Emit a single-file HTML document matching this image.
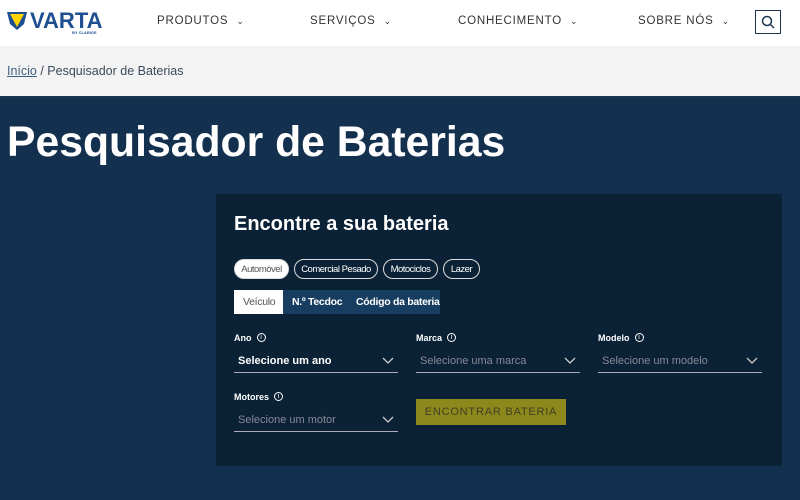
<!DOCTYPE html>
<html><head><meta charset="utf-8"><style>
*{margin:0;padding:0;box-sizing:border-box}
body{width:800px;height:500px;overflow:hidden;font-family:"Liberation Sans",Arial,sans-serif;background:#13314f}
.hdr{height:46px;background:#fff;position:relative}
.nav{position:absolute;top:15px;font-size:11.5px;letter-spacing:.8px;color:#333}
.nav span{font-size:9px;margin-left:8px}
.crumb{height:52px;background:#f3f3f3;font-size:12.5px;color:#3a4a5a;padding:18px 0 0 7px;border-bottom:2px solid #1d3550}
.crumb u{color:#3f5f7f}
h1{position:absolute;top:118px;left:7px;color:#fff;font-size:42.7px;font-weight:bold}
.panel{position:absolute;left:216px;top:194px;width:566px;height:272px;background:#0b2135}
.panel h2{position:absolute;left:18px;top:19px;color:#fff;font-size:20px}
.pill{position:absolute;z-index:5;top:259px;height:20px;border:1.5px solid #ddd;border-radius:11px;color:#fff;font-size:9.5px;letter-spacing:-.5px;white-space:nowrap;text-align:center;padding-top:3.5px}
.tabs{position:absolute;left:18px;top:96px;height:24px;background:#173d60;width:206px}
.tab{position:absolute;top:0;height:24px;font-size:10.5px;color:#fff;font-weight:bold;padding-top:6px;white-space:nowrap;letter-spacing:-.3px}
.lbl{position:absolute;font-size:9px;color:#fff;font-weight:bold}
.lbl i{font-style:normal;font-weight:normal;border:1px solid #fff;border-radius:50%;display:inline-block;width:9px;height:9px;line-height:8px;text-align:center;font-size:7px;margin-left:5px;vertical-align:2px}
.sel{position:absolute;width:164px;height:22px;border-bottom:1px solid #aab;font-size:11px;color:#889;padding:4px 0 0 4px}
.sel svg{position:absolute;right:4px;top:6px}
.btn{position:absolute;left:200px;top:205px;width:150px;height:26px;background:#8d881c;color:#3f3f25;font-size:11px;letter-spacing:.8px;text-align:center;padding-top:7px}
</style></head><body>
<div class="hdr">
<svg style="position:absolute;left:7px;top:11px" width="20" height="20" viewBox="0 0 20 20"><path d="M0 1h20l-3 12-7 6-7-6z" fill="#1d4f91"/><path d="M3 3h14l-7 13z" fill="#ffd400"/></svg>
<div style="position:absolute;left:30px;top:8px;font-weight:900;font-size:22px;color:#1d4f91">VARTA</div>
<div style="position:absolute;left:72px;top:30px;font-size:4px;color:#1d4f91;font-weight:bold">BY CLARIOS</div>
<div class="nav" style="left:157px">PRODUTOS<span>⌄</span></div>
<div class="nav" style="left:310px">SERVIÇOS<span>⌄</span></div>
<div class="nav" style="left:458px">CONHECIMENTO<span>⌄</span></div>
<div class="nav" style="left:638px">SOBRE NÓS<span>⌄</span></div>
<div style="position:absolute;left:755px;top:10px;width:26px;height:24px;border:1px solid #1d3550"><svg width="24" height="22" viewBox="0 0 24 22"><circle cx="11" cy="10" r="4.5" fill="none" stroke="#1d3550" stroke-width="1.5"/><path d="M14 13l4 4" stroke="#1d3550" stroke-width="1.5"/></svg></div>
</div>
<div class="crumb"><u>Início</u> / Pesquisador de Baterias</div>
<h1>Pesquisador de Baterias</h1>
<div class="panel">
<h2>Encontre a sua bateria</h2>
<div class="tabs">
<div class="tab" style="left:0;width:49px;background:#fff;color:#555;font-weight:normal;padding-left:9px">Veículo</div>
<div class="tab" style="left:58px">N.º Tecdoc</div>
<div class="tab" style="left:122px">Código da bateria</div>
</div>
<div class="lbl" style="left:18px;top:139px">Ano<i>i</i></div>
<div class="lbl" style="left:200px;top:139px">Marca<i>i</i></div>
<div class="lbl" style="left:382px;top:139px">Modelo<i>i</i></div>
<div class="lbl" style="left:18px;top:198px">Motores<i>i</i></div>
<div class="sel" style="left:18px;top:157px;color:#fff;font-weight:bold">Selecione um ano<svg width="12" height="8"><path d="M1 1l5 5 5-5" stroke="#ccc" fill="none" stroke-width="1.3"/></svg></div>
<div class="sel" style="left:200px;top:157px">Selecione uma marca<svg width="12" height="8"><path d="M1 1l5 5 5-5" stroke="#ccc" fill="none" stroke-width="1.3"/></svg></div>
<div class="sel" style="left:382px;top:157px">Selecione um modelo<svg width="12" height="8"><path d="M1 1l5 5 5-5" stroke="#ccc" fill="none" stroke-width="1.3"/></svg></div>
<div class="sel" style="left:18px;top:216px">Selecione um motor<svg width="12" height="8"><path d="M1 1l5 5 5-5" stroke="#ccc" fill="none" stroke-width="1.3"/></svg></div>
<div class="btn">ENCONTRAR BATERIA</div>
</div>
<div class="pill" style="left:234px;width:55px;background:#fff;color:#555">Automóvel</div>
<div class="pill" style="left:294px;width:84px">Comercial Pesado</div>
<div class="pill" style="left:383px;width:55px">Motociclos</div>
<div class="pill" style="left:443px;width:37px">Lazer</div>
</body></html>
